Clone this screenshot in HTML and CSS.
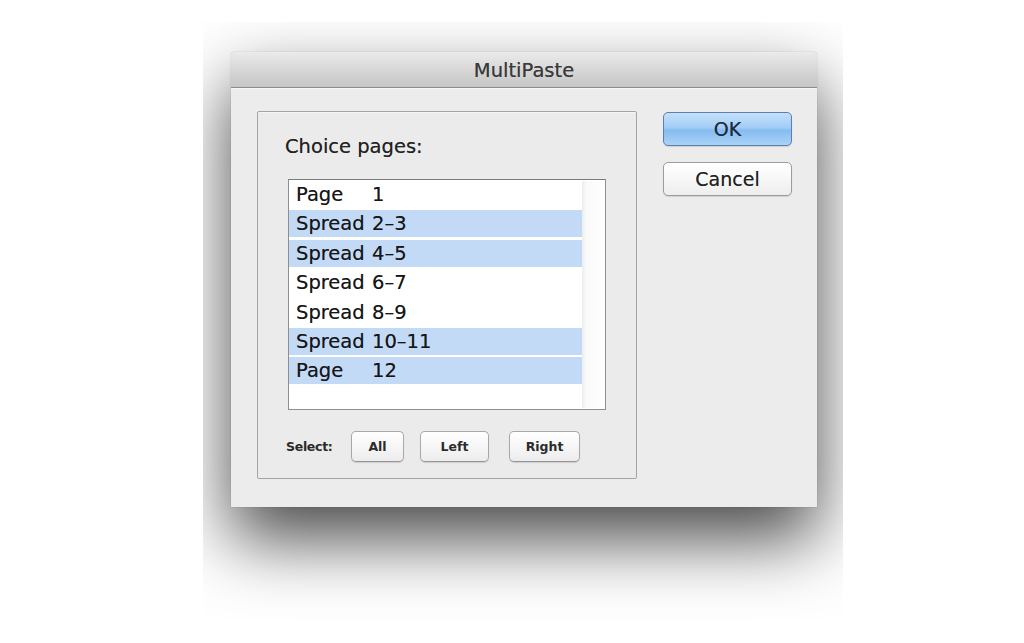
FILE: index.html
```html
<!DOCTYPE html>
<html>
<head>
<meta charset="utf-8">
<link rel="stylesheet" href="styles.css">
</head>
<body>
<div class="stage">
  <div class="window">
    <div class="titlebar">MultiPaste</div>
    <div class="body">
      <div class="group">
        <div class="group-label">Choice pages:</div>
        <div class="list">
          <div class="rows">
            <div class="row"><span class="lbl">Page</span><span>1</span></div>
            <div class="row sel"><span class="lbl">Spread</span><span>2–3</span></div>
            <div class="row sel"><span class="lbl">Spread</span><span>4–5</span></div>
            <div class="row"><span class="lbl">Spread</span><span>6–7</span></div>
            <div class="row"><span class="lbl">Spread</span><span>8–9</span></div>
            <div class="row sel"><span class="lbl">Spread</span><span>10–11</span></div>
            <div class="row sel"><span class="lbl">Page</span><span>12</span></div>
          </div>
          <div class="scroll"></div>
        </div>
        <div class="select-row">
          <span class="select-label">Select:</span>
          <button class="sbtn all">All</button>
          <button class="sbtn left">Left</button>
          <button class="sbtn right">Right</button>
        </div>
      </div>
      <div class="actions">
        <button class="btn primary">OK</button>
        <button class="btn">Cancel</button>
      </div>
    </div>
  </div>
</div>
</body>
</html>
```

FILE: styles.css
```css
html, body {
  margin: 0;
  padding: 0;
  background: #ffffff;
}
body {
  font-family: "DejaVu Sans", "Liberation Sans", sans-serif;
  color: #1e1e1e;
}
.stage {
  margin-left: 203px;
  margin-top: 22px;
  width: 640px;
  height: 598px;
  overflow: hidden;
  padding: 30px 0 0 28px;
  box-sizing: border-box;
  background: #ffffff;
}
.window {
  width: 586px;
  height: 455px;
  background: #ececec;
  border-radius: 4px 4px 0 0;
  box-shadow: 0 32px 70px rgba(0,0,0,0.72), 0 0 1px rgba(0,0,0,0.45);
  display: flex;
  flex-direction: column;
}
.titlebar {
  height: 35px;
  flex: none;
  border-radius: 4px 4px 0 0;
  background: linear-gradient(#ebebeb, #d9d9d9 45%, #c6c6c6);
  border-bottom: 1px solid #8c8c8c;
  box-shadow: 0 1px 0 #f7f7f7;
  text-align: center;
  font-size: 19.5px;
  line-height: 38px;
  color: #3a3a3a;
  text-shadow: 0 0 0.6px rgba(0,0,0,0.5);
}
.body {
  display: flex;
  padding: 23px 0 0 26px;
  gap: 26px;
}
.group {
  border: 1px solid #a4a4a4;
  border-radius: 2px;
  background: #ebebeb;
  box-shadow: inset 0 1px 0 #f6f6f6;
  padding: 23px 0 0 27px;
  box-sizing: border-box;
  width: 380px;
  height: 368px;
}
.group-label {
  font-size: 19.5px;
  line-height: 24px;
  color: #222222;
  text-shadow: 0 0 0.6px rgba(0,0,0,0.5);
}
.list {
  margin: 20px 0 0 3px;
  width: 318px;
  height: 231px;
  border: 1px solid #8e8e8e;
  border-top-color: #7a7a7a;
  box-sizing: border-box;
  background: #ffffff;
  display: flex;
  padding-top: 1px;
}
.rows {
  width: 293px;
  flex: none;
}
.scroll {
  flex: 1;
  background: linear-gradient(90deg, #ececec, #fafafa 4px, #ffffff);
  margin-bottom: 1px;
}
.row {
  height: 27px;
  margin-bottom: 2.4px;
  padding-left: 7px;
  font-size: 19.5px;
  line-height: 28px;
  color: #161616;
  display: flex;
  white-space: nowrap;
  text-shadow: 0 0 0.6px rgba(0,0,0,0.5);
}
.row.sel {
  background: #c3daf6;
}
.lbl {
  width: 76px;
  flex: none;
}
.select-row {
  display: flex;
  align-items: center;
  margin-top: 21px;
  margin-left: 1px;
}
.select-label {
  font-size: 12.5px;
  font-weight: bold;
  color: #2a2a2a;
  width: 48px;
  letter-spacing: -0.3px;
}
.sbtn {
  font-family: "DejaVu Sans", "Liberation Sans", sans-serif;
  font-size: 12.5px;
  font-weight: bold;
  color: #2c2c2c;
  height: 31px;
  border: 1px solid #a9a9a9;
  border-bottom-color: #959595;
  border-radius: 5px;
  background: linear-gradient(#ffffff, #f6f6f6 50%, #ececec);
  box-shadow: 0 1px 1px rgba(0,0,0,0.12);
  padding: 0;
}
.sbtn.all { width: 53px; margin-left: 17px; }
.sbtn.left { width: 69px; margin-left: 16px; }
.sbtn.right { width: 71px; margin-left: 20px; }
.actions {
  display: flex;
  flex-direction: column;
  gap: 16px;
  padding-top: 1px;
}
.btn {
  font-family: "DejaVu Sans", "Liberation Sans", sans-serif;
  width: 129px;
  height: 34px;
  font-size: 19px;
  color: #222222;
  border: 1px solid #9c9c9c;
  border-radius: 5px;
  background: linear-gradient(#ffffff, #f7f7f7 50%, #ededed);
  box-shadow: 0 1px 1px rgba(0,0,0,0.12);
  padding: 0;
  text-shadow: 0 0 0.6px rgba(0,0,0,0.5);
}
.btn.primary {
  border-color: #5b7fae;
  background: linear-gradient(#c4e0fb, #a3cdf6 45%, #86bcf0 55%, #a9d3f7);
  color: #1d2a3a;
}
```
